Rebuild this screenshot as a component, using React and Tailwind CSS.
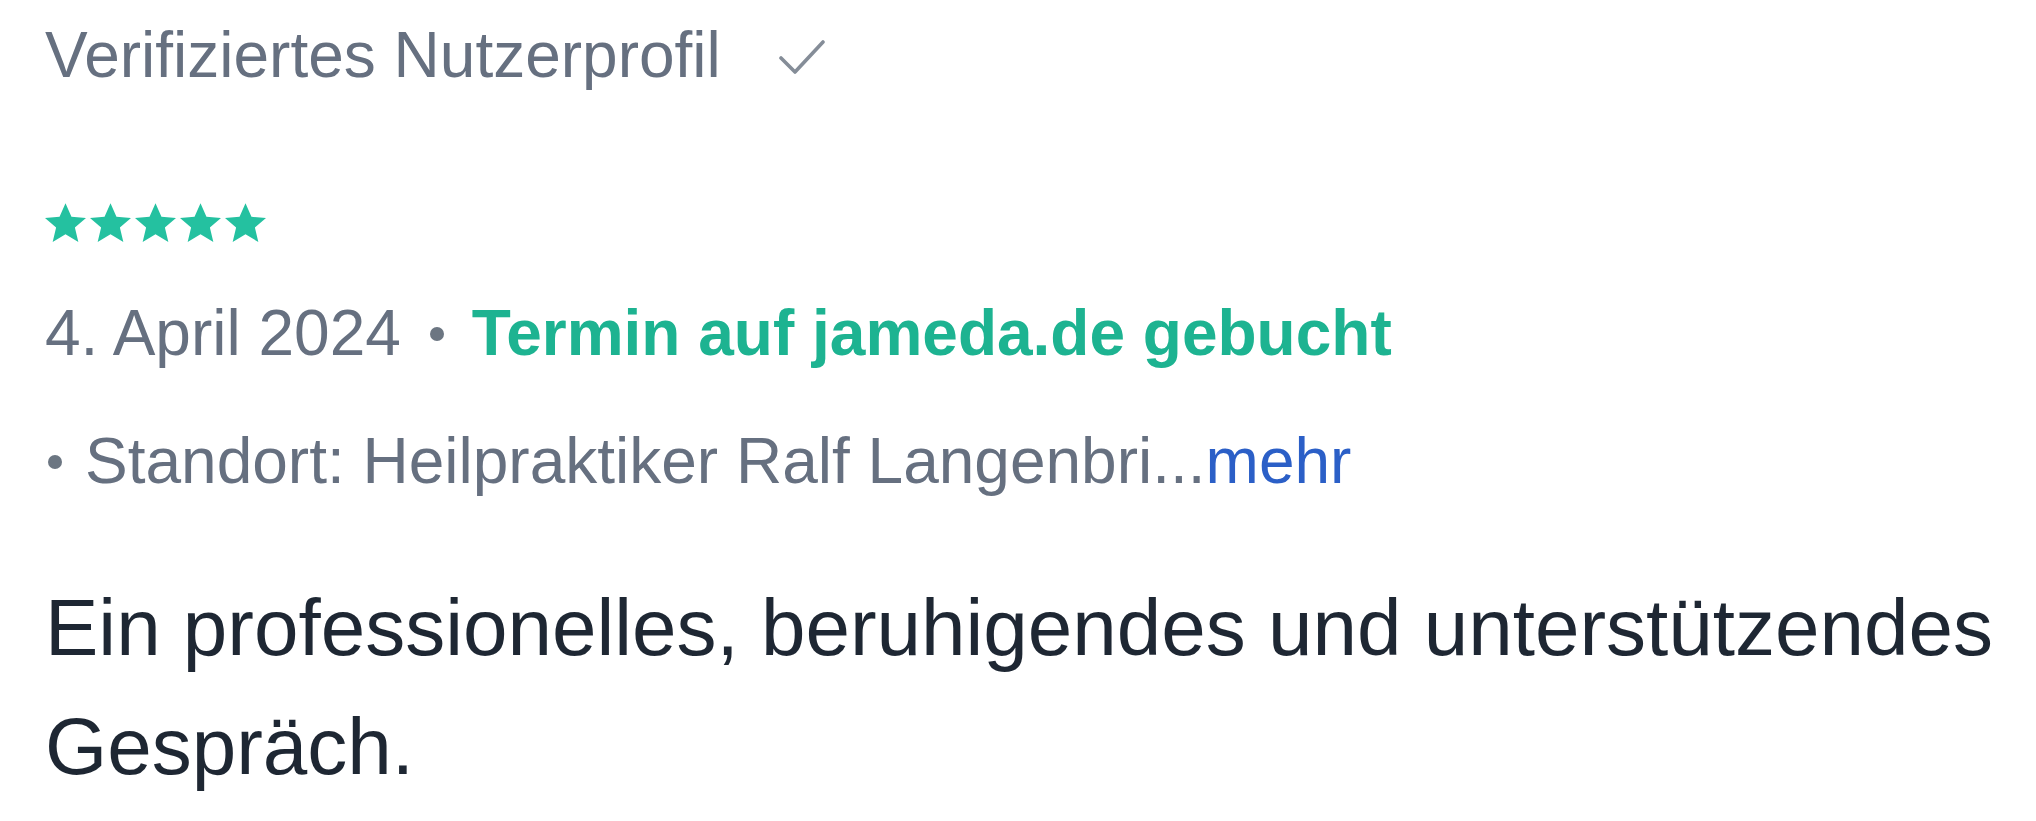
import React from 'react';

function Star() {
  return (
    <svg width="41" height="40" viewBox="1.3 1.6 21.4 20.6" className="shrink-0">
      <path
        d="M12 1.6l3.1 7.1 7.6.6-5.8 5 1.8 7.5L12 17.8l-6.7 4 1.8-7.5-5.8-5 7.6-.6z"
        fill="#24c1a0"
      />
    </svg>
  );
}

function Dot({ className = '' }) {
  return <span className={`inline-block w-[14px] h-[14px] rounded-full bg-[#6c7682] align-middle ${className}`} />;
}

export default function App() {
  const gray = 'text-[#667080]';

  return (
    <div className="min-h-screen bg-white pl-[45px] pr-[20px] pt-[15px] font-['Liberation_Sans',Arial,sans-serif]">
      {/* verified badge */}
      <div className={`flex items-center h-[80px] text-[64px] leading-[80px] ${gray}`}>
        <span>Verifiziertes Nutzerprofil</span>
        <svg width="46" height="36" viewBox="0 0 46 36" className="ml-[58px] mt-[4px]">
          <path d="M2 19l14 14L44 3" fill="none" stroke="#858d98" strokeWidth="3.6" strokeLinecap="round" strokeLinejoin="round" />
        </svg>
      </div>

      {/* rating */}
      <div className="flex gap-[4px] mt-[108px] h-[40px]">
        <Star />
        <Star />
        <Star />
        <Star />
        <Star />
      </div>

      {/* date + booking */}
      <div className={`mt-[50px] h-[80px] text-[64px] leading-[80px] whitespace-nowrap ${gray}`}>
        4. April 2024
        <Dot className="ml-[29px] mr-[28px] -mt-[8px]" />
        <span className="font-bold text-[#1db391]">Termin auf jameda.de gebucht</span>
      </div>

      {/* location */}
      <div className={`mt-[48px] h-[80px] text-[64px] leading-[80px] whitespace-nowrap ${gray}`}>
        <Dot className="ml-[3px] mr-[23px] -mt-[8px]" />
        Standort: Heilpraktiker Ralf Langenbri...<span className="text-[#2b5fc7]">mehr</span>
      </div>

      {/* review text */}
      <p className="mt-[67px] text-[80px] leading-[119px] text-[#1e2733]">
        Ein professionelles, beruhigendes und unterstützendes Gespräch.
      </p>
    </div>
  );
}
